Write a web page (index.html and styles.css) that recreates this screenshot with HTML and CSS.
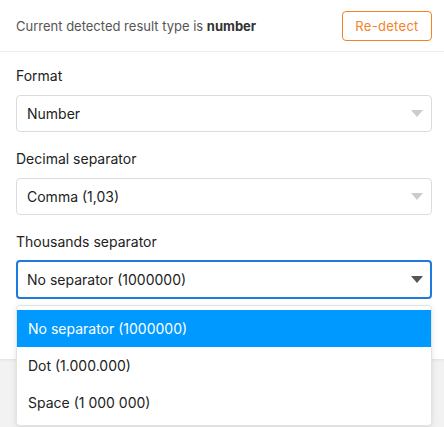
FILE: index.html
```html
<!DOCTYPE html>
<html>
<head>
<meta charset="utf-8">
<link rel="stylesheet" href="styles.css">
</head>
<body>
<div class="page">
  <div class="panel">
    <div class="header">
      <div class="detected">Current detected result type is <b>number</b></div>
      <button class="redetect">Re-detect</button>
    </div>
    <div class="form">
      <div class="field">
        <div class="label">Format</div>
        <div class="select"><span>Number</span><span class="arrow light"></span></div>
      </div>
      <div class="field">
        <div class="label">Decimal separator</div>
        <div class="select"><span>Comma (1,03)</span><span class="arrow light"></span></div>
      </div>
      <div class="field">
        <div class="label">Thousands separator</div>
        <div class="select focused"><span>No separator (1000000)</span><span class="arrow dark"></span></div>
      </div>
    </div>
  </div>
  <div class="menu">
    <div class="option active">No separator (1000000)</div>
    <div class="option">Dot (1.000.000)</div>
    <div class="option">Space (1 000 000)</div>
  </div>
</div>
</body>
</html>
```

FILE: styles.css
```css
html, body {
  margin: 0;
  padding: 0;
  background: #f2f2f3;
  font-family: Inter, "Noto Sans", sans-serif;
  color: #222;
}
.page {
  position: relative;
  height: 427px;
}
.panel {
  background: #fff;
  height: 359px;
  box-shadow: 0 1px 3px rgba(0,0,0,0.08);
}
.header {
  display: flex;
  align-items: center;
  justify-content: space-between;
  height: 52px;
  padding: 0 12px 0 16px;
  border-bottom: 1px solid #ececec;
  box-sizing: border-box;
}
.detected {
  font-size: 13px;
  color: #555;
  margin-top: 1px;
}
.detected b {
  color: #333;
  font-weight: 700;
}
.redetect {
  font-family: inherit;
  font-size: 13px;
  color: #f5821f;
  background: #fff;
  border: 1px solid #f5821f;
  border-radius: 4px;
  width: 90px;
  height: 30px;
  padding: 0;
  margin-top: 1px;
  letter-spacing: 0.3px;
}
.form {
  padding: 15px 12px 0 16px;
  display: flex;
  flex-direction: column;
  gap: 18px;
}
.label {
  font-size: 14px;
  color: #222;
  line-height: 18px;
  margin-bottom: 10px;
}
.select {
  display: flex;
  align-items: center;
  justify-content: space-between;
  height: 37px;
  box-sizing: border-box;
  border: 1px solid #dcdcdc;
  border-radius: 4px;
  padding: 0 8px 0 10px;
  font-size: 14px;
  color: #222;
}
.select.focused {
  border: 2px solid #1f7ae0;
  height: 39px;
  padding: 0 7px 0 9px;
  margin-top: -1px;
}
.arrow {
  width: 0;
  height: 0;
  border-left: 6px solid transparent;
  border-right: 6px solid transparent;
  border-top: 7px solid #ccc;
}
.arrow.dark {
  border-top-color: #555;
}
.menu {
  position: absolute;
  z-index: 2;
  left: 16px;
  top: 305px;
  width: 416px;
  box-sizing: border-box;
  background: #fff;
  border: 1px solid #e3e3e3;
  border-radius: 4px;
  padding: 4px 0 4px;
  box-shadow: 0 2px 6px rgba(0,0,0,0.10);
}
.option {
  height: 37px;
  line-height: 37px;
  padding: 0 11px;
  font-size: 14px;
  color: #222;
}
.option.active {
  background: #0099ff;
  color: #fff;
}
```
